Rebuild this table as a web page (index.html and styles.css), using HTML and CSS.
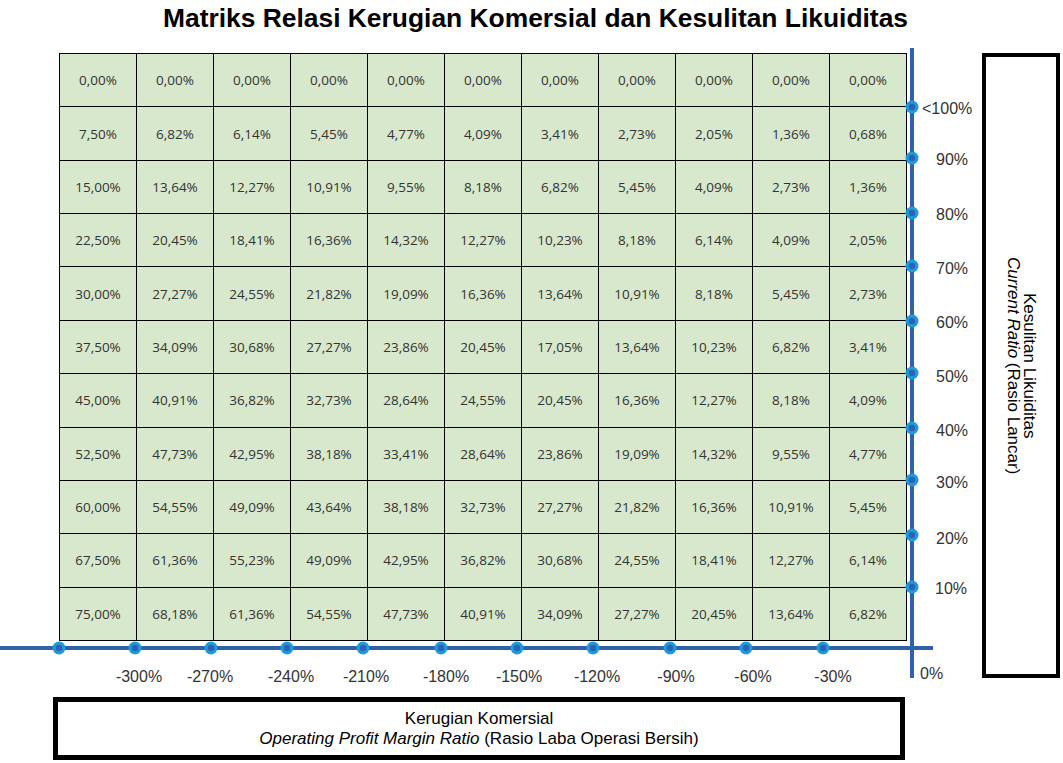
FILE: index.html
```html
<!DOCTYPE html>
<html lang="id">
<head>
<meta charset="utf-8">
<title>Matriks Relasi Kerugian Komersial dan Kesulitan Likuiditas</title>
<link rel="stylesheet" href="styles.css">
</head>
<body>
<div class="page">
  <h1 class="title">Matriks Relasi Kerugian Komersial dan Kesulitan Likuiditas</h1>

  <div class="chart">
    <table class="matrix">
      <tbody>
        <tr><td>0,00%</td><td>0,00%</td><td>0,00%</td><td>0,00%</td><td>0,00%</td><td>0,00%</td><td>0,00%</td><td>0,00%</td><td>0,00%</td><td>0,00%</td><td>0,00%</td></tr>
        <tr><td>7,50%</td><td>6,82%</td><td>6,14%</td><td>5,45%</td><td>4,77%</td><td>4,09%</td><td>3,41%</td><td>2,73%</td><td>2,05%</td><td>1,36%</td><td>0,68%</td></tr>
        <tr><td>15,00%</td><td>13,64%</td><td>12,27%</td><td>10,91%</td><td>9,55%</td><td>8,18%</td><td>6,82%</td><td>5,45%</td><td>4,09%</td><td>2,73%</td><td>1,36%</td></tr>
        <tr><td>22,50%</td><td>20,45%</td><td>18,41%</td><td>16,36%</td><td>14,32%</td><td>12,27%</td><td>10,23%</td><td>8,18%</td><td>6,14%</td><td>4,09%</td><td>2,05%</td></tr>
        <tr><td>30,00%</td><td>27,27%</td><td>24,55%</td><td>21,82%</td><td>19,09%</td><td>16,36%</td><td>13,64%</td><td>10,91%</td><td>8,18%</td><td>5,45%</td><td>2,73%</td></tr>
        <tr><td>37,50%</td><td>34,09%</td><td>30,68%</td><td>27,27%</td><td>23,86%</td><td>20,45%</td><td>17,05%</td><td>13,64%</td><td>10,23%</td><td>6,82%</td><td>3,41%</td></tr>
        <tr><td>45,00%</td><td>40,91%</td><td>36,82%</td><td>32,73%</td><td>28,64%</td><td>24,55%</td><td>20,45%</td><td>16,36%</td><td>12,27%</td><td>8,18%</td><td>4,09%</td></tr>
        <tr><td>52,50%</td><td>47,73%</td><td>42,95%</td><td>38,18%</td><td>33,41%</td><td>28,64%</td><td>23,86%</td><td>19,09%</td><td>14,32%</td><td>9,55%</td><td>4,77%</td></tr>
        <tr><td>60,00%</td><td>54,55%</td><td>49,09%</td><td>43,64%</td><td>38,18%</td><td>32,73%</td><td>27,27%</td><td>21,82%</td><td>16,36%</td><td>10,91%</td><td>5,45%</td></tr>
        <tr><td>67,50%</td><td>61,36%</td><td>55,23%</td><td>49,09%</td><td>42,95%</td><td>36,82%</td><td>30,68%</td><td>24,55%</td><td>18,41%</td><td>12,27%</td><td>6,14%</td></tr>
        <tr><td>75,00%</td><td>68,18%</td><td>61,36%</td><td>54,55%</td><td>47,73%</td><td>40,91%</td><td>34,09%</td><td>27,27%</td><td>20,45%</td><td>13,64%</td><td>6,82%</td></tr>
      </tbody>
    </table>

    <svg class="axes" width="982" height="660" viewBox="0 0 982 660">
      <g class="axis-lines">
        <line x1="0" y1="605" x2="933" y2="605" class="axis"/>
        <line x1="912" y1="5" x2="912" y2="635" class="axis"/>
      </g>
      <g class="dots">
        <circle cx="59" cy="605" r="6.5"/><circle cx="135" cy="605" r="6.5"/><circle cx="211" cy="605" r="6.5"/>
        <circle cx="287" cy="605" r="6.5"/><circle cx="363" cy="605" r="6.5"/><circle cx="441" cy="605" r="6.5"/>
        <circle cx="517" cy="605" r="6.5"/><circle cx="593" cy="605" r="6.5"/><circle cx="670" cy="605" r="6.5"/>
        <circle cx="746" cy="605" r="6.5"/><circle cx="823" cy="605" r="6.5"/>
        <circle cx="912" cy="64" r="6.5"/><circle cx="912" cy="115" r="6.5"/><circle cx="912" cy="170" r="6.5"/>
        <circle cx="912" cy="223" r="6.5"/><circle cx="912" cy="278" r="6.5"/><circle cx="912" cy="330" r="6.5"/>
        <circle cx="912" cy="385" r="6.5"/><circle cx="912" cy="437" r="6.5"/><circle cx="912" cy="492" r="6.5"/>
        <circle cx="912" cy="544" r="6.5"/>
      </g>
      <g class="dot-cores">
        <circle cx="59" cy="605" r="3.2"/><circle cx="135" cy="605" r="3.2"/><circle cx="211" cy="605" r="3.2"/>
        <circle cx="287" cy="605" r="3.2"/><circle cx="363" cy="605" r="3.2"/><circle cx="441" cy="605" r="3.2"/>
        <circle cx="517" cy="605" r="3.2"/><circle cx="593" cy="605" r="3.2"/><circle cx="670" cy="605" r="3.2"/>
        <circle cx="746" cy="605" r="3.2"/><circle cx="823" cy="605" r="3.2"/>
        <circle cx="912" cy="64" r="3.2"/><circle cx="912" cy="115" r="3.2"/><circle cx="912" cy="170" r="3.2"/>
        <circle cx="912" cy="223" r="3.2"/><circle cx="912" cy="278" r="3.2"/><circle cx="912" cy="330" r="3.2"/>
        <circle cx="912" cy="385" r="3.2"/><circle cx="912" cy="437" r="3.2"/><circle cx="912" cy="492" r="3.2"/>
        <circle cx="912" cy="544" r="3.2"/>
      </g>
      <g class="labels x-labels">
        <text x="139" y="633">-300%</text>
        <text x="210" y="633">-270%</text>
        <text x="291" y="633">-240%</text>
        <text x="366" y="633">-210%</text>
        <text x="446" y="633">-180%</text>
        <text x="519" y="633">-150%</text>
        <text x="597" y="633">-120%</text>
        <text x="676" y="633">-90%</text>
        <text x="753" y="633">-60%</text>
        <text x="833" y="633">-30%</text>
      </g>
      <g class="labels y-labels">
        <text x="922" y="65">&lt;100%</text>
        <text x="936" y="116">90%</text>
        <text x="936" y="171">80%</text>
        <text x="936" y="225">70%</text>
        <text x="936" y="279">60%</text>
        <text x="936" y="333">50%</text>
        <text x="936" y="387">40%</text>
        <text x="936" y="439">30%</text>
        <text x="936" y="495">20%</text>
        <text x="935" y="545">10%</text>
        <text x="920" y="630">0%</text>
      </g>
    </svg>
  </div>

  <div class="ybox">
    <div class="ybox-text">
      <span class="line">Kesulitan Likuiditas</span>
      <span class="line"><em>Current Ratio</em> (Rasio Lancar)</span>
    </div>
  </div>

  <div class="xbox">
    <span class="line">Kerugian Komersial</span>
    <span class="line"><em>Operating Profit Margin Ratio</em> (Rasio Laba Operasi Bersih)</span>
  </div>
</div>
</body>
</html>
```

FILE: styles.css
```css
* { box-sizing: border-box; }

html, body {
  margin: 0;
  padding: 0;
  background: #ffffff;
}

body {
  width: 1063px;
  height: 763px;
  overflow: hidden;
  font-family: "Liberation Sans", Arial, sans-serif;
  color: #000;
}

.page {
  display: grid;
  grid-template-columns: 982px 78px;
  grid-template-rows: 53px 644px 63px;
}

.title {
  grid-column: 1 / 3;
  margin: 0;
  padding: 3px 0 0 11px;
  font-size: 26.4px;
  line-height: 30px;
  font-weight: bold;
  text-align: center;
  color: #000;
}

.chart {
  grid-column: 1;
  grid-row: 2;
  position: relative;
}

.matrix {
  margin-left: 59px;
  width: 848px;
  height: 588px;
  border-collapse: collapse;
  table-layout: fixed;
  background: #d8e8cc;
}

.matrix td {
  border: 1px solid #000;
  text-align: center;
  vertical-align: middle;
  padding: 0;
  font-family: "Open Sans", "Noto Sans", sans-serif;
  font-size: 13.5px;
  color: #333;
}

.axes {
  position: absolute;
  left: 0;
  top: -10px;
  overflow: visible;
}

.axis {
  stroke: #2f62a8;
  stroke-width: 4;
}

.dots circle { fill: #1e9ae0; }
.dot-cores circle { fill: #2d62ae; }

.labels text {
  font-family: "Liberation Sans", Arial, sans-serif;
  font-size: 16px;
  fill: #333;
  dominant-baseline: central;
}

.x-labels text { text-anchor: middle; }

.ybox {
  grid-column: 2;
  grid-row: 2;
  height: 625px;
  border: 4px solid #000;
  display: flex;
  align-items: center;
  justify-content: center;
}

.ybox-text {
  writing-mode: vertical-rl;
  display: flex;
  flex-direction: column;
  align-items: center;
  font-size: 17px;
  line-height: 16px;
}

.xbox {
  grid-column: 1 / 3;
  grid-row: 3;
  margin-left: 53px;
  width: 852px;
  height: 63px;
  border: 5px solid #000;
  display: flex;
  flex-direction: column;
  align-items: center;
  justify-content: center;
  font-size: 17px;
  line-height: 20px;
}

.line { display: block; }
```
